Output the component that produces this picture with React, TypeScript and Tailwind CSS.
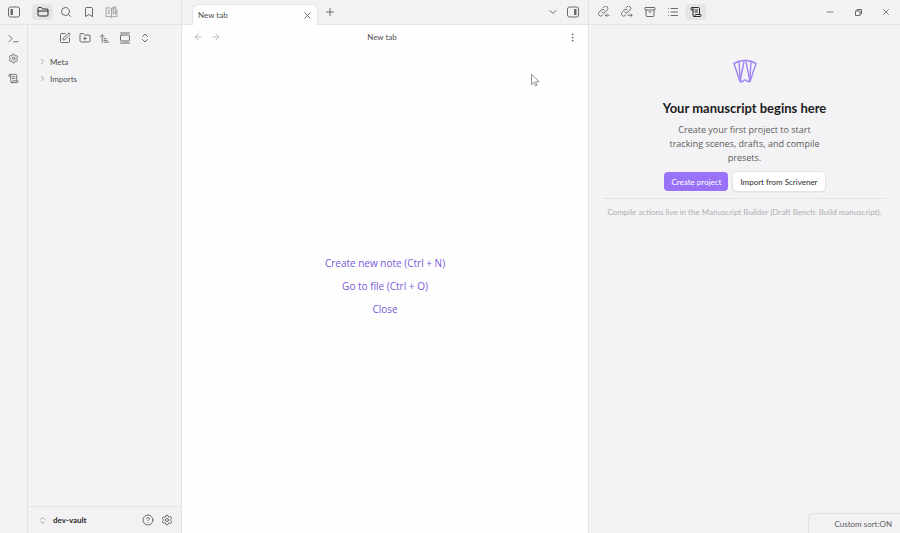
import React from 'react';
import {
  Search, Bookmark, SquarePen, FolderPlus, ArrowUpNarrowWide, GalleryVertical,
  ChevronsUpDown, ChevronRight, ChevronDown, Settings, ScrollText, X, Plus, ArrowLeft,
  ArrowRight, Archive, List, CircleHelp, Minus, EllipsisVertical, FolderClosed,
} from 'lucide-react';

type Children = { children: React.ReactNode };

function IconButton({ label, active, className = '', children }: Children & { label: string; active?: boolean; className?: string }) {
  return (
    <button
      type="button"
      aria-label={label}
      className={`flex shrink-0 items-center justify-center rounded ${active ? 'bg-[#e6e4e7] text-[#2a2a2a]' : 'text-[#6b6a6b]'} ${className}`}
    >
      {children}
    </button>
  );
}

function SidebarIcon({ right }: { right?: boolean }) {
  return (
    <svg width="12" height="12" viewBox="0 0 24 24" fill="none" stroke="currentColor" strokeWidth="2">
      <rect x="1" y="2" width="22" height="20" rx="4" />
      <rect x={right ? 14 : 5} y="6" width="5" height="12" rx="1" fill="currentColor" stroke="none" />
    </svg>
  );
}

function LinkIcon({ incoming }: { incoming?: boolean }) {
  return (
    <svg width="12" height="12" viewBox="0 0 24 24" fill="none" stroke="currentColor" strokeWidth="1.8" strokeLinecap="round" strokeLinejoin="round">
      <path d="M7.500 12a4.500 4.500 0 0 0 6.800.5l4-4.500a4.500 4.500 0 0 0-6.400-6.400L9.500 4" />
      <path d="M13 8.500a4.500 4.500 0 0 0-6.800-.5l-4 4.500a4.500 4.500 0 0 0 6.400 6.400l1.500-1.500" />
      <path d={incoming ? 'M22 18.500h-7M18 15.500l-3 3 3 3' : 'M14 18.500h8M19 15.500l3 3-3 3'} />
    </svg>
  );
}

function BookIcon() {
  return (
    <svg width="13" height="13" viewBox="0 0 24 24" fill="none" stroke="currentColor" strokeWidth="1.500" strokeLinejoin="round">
      <path d="M12 5v16M12 5C9 3 5 3 2 4v16c3-1 7-1 10 1M12 5c1-1 2-1 4-1M22 7v13c-3-1-7-1-10 1" />
      <path d="M5 8h4M5 11h4M5 14h4M15 2h5v13l-2.500-2-2.500 2z" fill="currentColor" fillOpacity="0.300" />
    </svg>
  );
}

function FanLogo() {
  return (
    <svg width="24" height="24" viewBox="0 0 24 24" fill="none" stroke="#a084f3" strokeWidth="1.400" strokeLinejoin="round">
      <path d="M6.500 2L1 4.500l6 18h2.500" />
      <path d="M17.500 2L23 4.500l-6 18h-2.500" />
      <path d="M6 2.500Q12 .5 18 2.500M6 2.500L7 19M18 2.500L17 19" />
      <path d="M11 2.500L7 22.500h2.500q2.500-3 5 0H17L13 2.500" />
    </svg>
  );
}

function Folder({ name }: { name: string }) {
  return (
    <li>
      <button type="button" className="flex h-[17px] w-full items-center gap-[3px] text-[8px] text-[#4f4f4f]">
        <ChevronRight size={9} className="text-[#8a8a8a]" />
        {name}
      </button>
    </li>
  );
}

function LeftPane() {
  return (
    <aside className="flex w-[182px] shrink-0 flex-col border-r border-[#e4e2e5]">
      <header className="flex h-[25px] shrink-0 items-center border-b border-[#e4e2e5] bg-[#f3f1f4]">
        <IconButton label="Toggle left sidebar" className="w-[27px]"><SidebarIcon /></IconButton>
        <div className="flex gap-0.5 pl-[5px]">
          <IconButton label="Files" active className="h-4 w-[21px]"><FolderClosed size={12} /></IconButton>
          <IconButton label="Search" className="h-4 w-[21px]"><Search size={12} /></IconButton>
          <IconButton label="Bookmarks" className="h-4 w-[21px]"><Bookmark size={12} /></IconButton>
          <IconButton label="Library" className="h-4 w-[21px] opacity-70"><BookIcon /></IconButton>
        </div>
      </header>
      <div className="flex min-h-0 flex-1">
        <nav className="flex w-7 shrink-0 flex-col items-center gap-1 border-r border-[#e4e2e5] pt-[5px]">
          <IconButton label="Command palette" className="size-4">
            <svg width="11" height="11" viewBox="0 0 24 24" fill="none" stroke="currentColor" strokeWidth="2" strokeLinecap="round" strokeLinejoin="round">
              <path d="M2 5l7 7-7 7M12 19h10" />
            </svg>
          </IconButton>
          <IconButton label="Options" className="size-4"><Settings size={11} /></IconButton>
          <IconButton label="Manuscript" className="size-4"><ScrollText size={11} /></IconButton>
        </nav>
        <div className="flex min-w-0 flex-1 flex-col">
          <div className="flex h-[26px] items-center justify-center gap-1">
            <IconButton label="New note" className="size-4"><SquarePen size={12} /></IconButton>
            <IconButton label="New folder" className="size-4"><FolderPlus size={12} /></IconButton>
            <IconButton label="Sort" className="size-4"><ArrowUpNarrowWide size={11} /></IconButton>
            <IconButton label="Auto-reveal" className="size-4"><GalleryVertical size={12} /></IconButton>
            <IconButton label="Expand all" className="size-4"><ChevronsUpDown size={12} /></IconButton>
          </div>
          <ul className="flex-1 pl-2.5 pt-0.5">
            <Folder name="Meta" />
            <Folder name="Imports" />
          </ul>
          <footer className="flex h-[27px] items-center border-t border-[#e4e2e5] bg-[#f3f1f4] pl-2.5 pr-1.5">
            <button type="button" className="flex flex-1 items-center gap-1.5 text-[8px] font-bold text-[#2a2a2a]">
              <ChevronsUpDown size={9} className="text-[#8a8a8a]" />
              dev-vault
            </button>
            <div className="flex gap-[3px]">
              <IconButton label="Help" className="size-4"><CircleHelp size={12} /></IconButton>
              <IconButton label="Settings" className="size-4"><Settings size={12} /></IconButton>
            </div>
          </footer>
        </div>
      </div>
    </aside>
  );
}

function MainPane() {
  return (
    <main className="relative flex min-w-0 flex-1 flex-col bg-[#fefefe]">
      <header className="flex h-[25px] shrink-0 items-end bg-[#f3f1f4]">
        <div className="h-full w-2.5 border-b border-[#e4e2e5]" />
        <div className="flex h-[21px] w-[126px] items-center justify-between rounded-t-md border border-b-0 border-[#e4e2e5] bg-[#fefefe] pl-[5px] pr-1 text-[8px] text-[#4f4f4f]">
          New tab
          <IconButton label="Close tab" className="size-3"><X size={11} /></IconButton>
        </div>
        <div className="flex h-full flex-1 items-center justify-between border-b border-[#e4e2e5] pl-1 pr-[7px]">
          <IconButton label="New tab" className="size-4"><Plus size={12} /></IconButton>
          <div className="flex gap-1">
            <IconButton label="Tab list" className="size-4"><ChevronDown size={12} /></IconButton>
            <IconButton label="Toggle right sidebar" className="size-4"><SidebarIcon right /></IconButton>
          </div>
        </div>
      </header>
      <div className="flex h-6 shrink-0 items-center px-2">
        <div className="flex w-10 gap-0.5 opacity-50">
          <IconButton label="Back" className="size-4"><ArrowLeft size={10} /></IconButton>
          <IconButton label="Forward" className="size-4"><ArrowRight size={10} /></IconButton>
        </div>
        <h1 className="flex-1 pr-1.5 text-center text-[8px] text-[#4f4f4f]">New tab</h1>
        <div className="flex w-10 justify-end"><IconButton label="More options" className="size-4"><EllipsisVertical size={11} /></IconButton></div>
      </div>
      <div className="flex flex-1 flex-col items-center justify-center gap-[7px] pb-2.5 font-['Open_Sans',sans-serif] text-[10px] leading-4 text-[#7a58d6]">
        <button type="button">Create new note (Ctrl + N)</button>
        <button type="button">Go to file (Ctrl + O)</button>
        <button type="button">Close</button>
      </div>
      <svg className="absolute right-12 top-[73px]" width="10" height="14" viewBox="0 0 10 14" fill="white" stroke="#777" strokeWidth="0.800">
        <path d="M1.500 1v10.500l2.400-2.200 1.600 3.600 1.500-.7L5.500 8.700H9z" />
      </svg>
    </main>
  );
}

function RightPane() {
  return (
    <aside className="flex w-[312px] shrink-0 flex-col border-l border-[#e4e2e5]">
      <header className="flex h-[25px] shrink-0 items-center justify-between border-b border-[#e4e2e5] bg-[#f3f1f4] pl-1">
        <div className="flex gap-0.5">
          <IconButton label="Backlinks" className="h-4 w-[21px]"><LinkIcon incoming /></IconButton>
          <IconButton label="Outgoing links" className="h-4 w-[21px]"><LinkIcon /></IconButton>
          <IconButton label="Properties" className="h-4 w-[21px]"><Archive size={12} /></IconButton>
          <IconButton label="Outline" className="h-4 w-[21px]"><List size={12} /></IconButton>
          <IconButton label="Manuscript builder" active className="h-4 w-[21px]"><ScrollText size={12} /></IconButton>
        </div>
        <div className="flex">
          <IconButton label="Minimize" className="w-7"><Minus size={10} /></IconButton>
          <IconButton label="Restore" className="w-7">
            <svg width="7" height="7" viewBox="0 0 7 7" fill="none" stroke="currentColor" strokeWidth="1">
              <path d="M.5 2h4.500v4.500H.5zM2 2V.5h4.500V5H5" />
            </svg>
          </IconButton>
          <IconButton label="Close window" className="w-7"><X size={10} /></IconButton>
        </div>
      </header>
      <section className="flex flex-1 flex-col items-center pt-[34px]">
        <FanLogo />
        <h2 className="mt-4 text-[13px] font-bold leading-[18px] text-[#1c1c1c]">Your manuscript begins here</h2>
        <p className="mt-1.5 w-[160px] text-center font-['Open_Sans',sans-serif] text-[9px] leading-[14px] text-[#5c5c5c]">
          Create your first project to start tracking scenes, drafts, and compile presets.
        </p>
        <div className="mt-[7px] flex gap-[5px] text-[8px]">
          <button type="button" className="h-[19px] rounded bg-[#9873f7] px-[7px] text-white">Create project</button>
          <button type="button" className="h-[19px] rounded bg-white px-[7px] text-[#2a2a2a] shadow-[0_0_0_1px_#e4e2e5,0_1px_2px_#0002]">Import from Scrivener</button>
        </div>
        <hr className="mx-3.5 mt-[7px] self-stretch border-[#e4e2e5]" />
        <p className="mt-[7px] whitespace-nowrap text-[8px] leading-3 text-[#b0afb1]">
          Compile actions live in the Manuscript Builder (Draft Bench: Build manuscript).
        </p>
      </section>
      <footer className="flex h-5 w-[92px] items-center justify-end self-end rounded-tl-md border-l border-t border-[#e0dee1] bg-[#f3f1f4] pr-2 text-[8px] text-[#5c5c5c]">
        Custom sort:ON
      </footer>
    </aside>
  );
}

export default function App() {
  return (
    <div className="flex h-screen overflow-hidden bg-[#f3f2f4] font-[Lato,'Open_Sans',sans-serif]">
      <LeftPane />
      <MainPane />
      <RightPane />
    </div>
  );
}
